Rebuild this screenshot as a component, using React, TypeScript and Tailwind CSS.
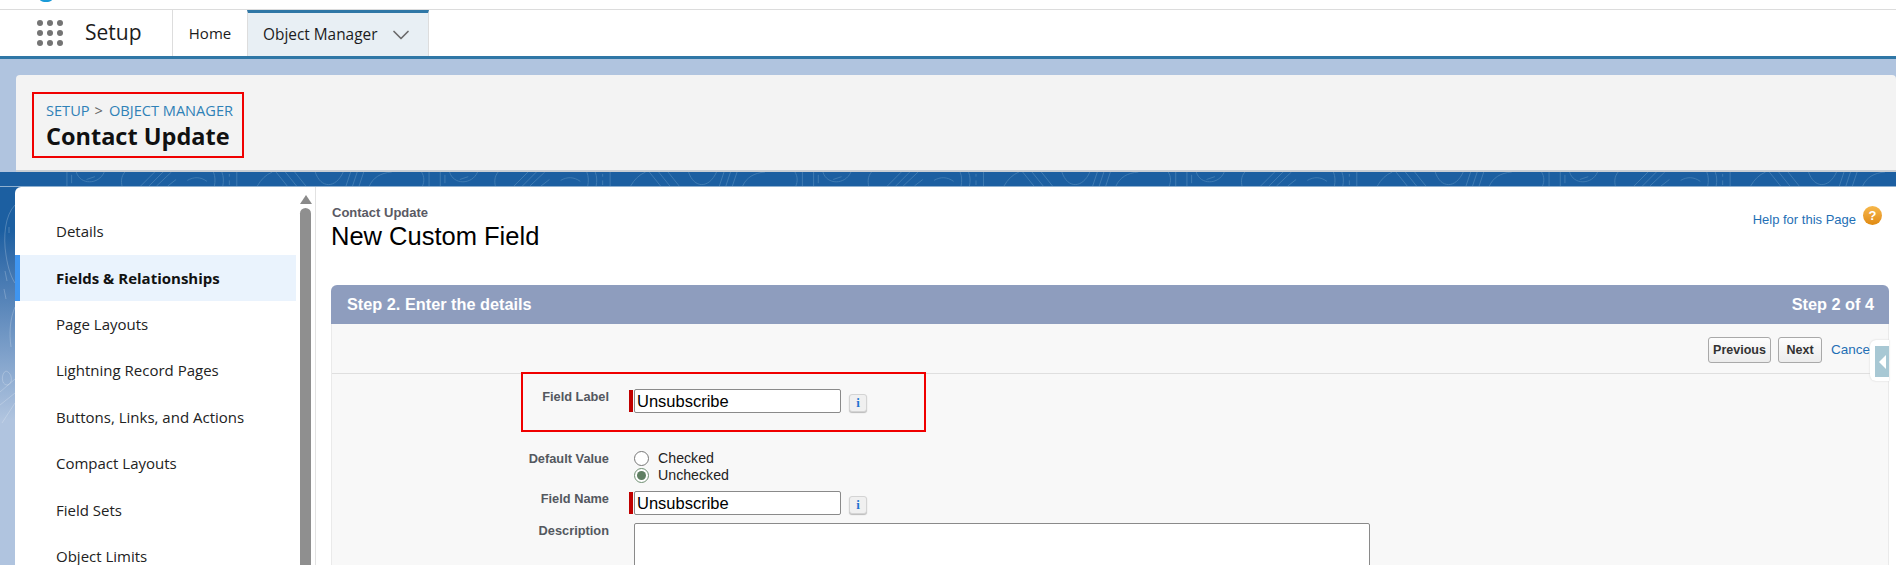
import { ChevronDown } from "lucide-react";

const NAV_ITEMS = [
  "Details",
  "Fields & Relationships",
  "Page Layouts",
  "Lightning Record Pages",
  "Buttons, Links, and Actions",
  "Compact Layouts",
  "Field Sets",
  "Object Limits",
];

const SEGOE = "font-['Open_Sans','Noto_Sans',sans-serif]";
const ARIAL = "font-['Liberation_Sans',Arial,sans-serif]";

function AppGrid() {
  return (
    <svg width="26" height="26" viewBox="0 0 26 26" className="fill-[#747474]">
      {[3, 13, 23].map((cy) =>
        [3, 13, 23].map((cx) => <circle key={`${cx}-${cy}`} cx={cx} cy={cy} r="3" />),
      )}
    </svg>
  );
}

// contour lines of the background texture, one tile is 400px wide
function BandPattern() {
  return (
    <svg className="absolute inset-0 h-full w-full" viewBox="0 0 1896 15" fill="none" stroke="#5b91c0" strokeWidth="1" opacity="0.6">
      {[0, 400, 800, 1200, 1600].map((x) => (
        <g key={x} transform={`translate(${x} 0)`}>
          <path d="M4 0V15M9 3V12" />
          <path d="M14 0C18 14 38 14 44 0" />
          <path d="M25 8L34 5" />
          <path d="M66 0C62 5 62 10 63 15" />
          <path d="M83 15L98 0M92 15L107 0M100 15L116 0M112 15L121 8" />
          <path d="M133 9C140 5 147 5 154 10" />
          <path d="M161 0C163 5 163 10 162 15M170 0C172 5 172 10 171 15M178 2V5M178 9V14M186 0V15" />
          <path d="M208 15C212 8 217 3 224 0" />
          <path d="M228 0L240 15M238 0L250 15M248 0L260 15" />
          <path d="M270 0C276 18 292 18 300 0" />
          <path d="M303 15L308 0M310 15L315 0M317 15L322 0" />
          <path d="M328 15C332 6 340 1 352 0" />
          <path d="M384 0C387 5 387 10 385 15M392 0V15" />
        </g>
      ))}
    </svg>
  );
}

function SideContours() {
  return (
    <svg className="absolute top-0 left-0 h-[260px] w-[15px]" viewBox="0 0 15 260" fill="none" stroke="#ffffff" strokeOpacity="0.22" strokeWidth="1">
      <path d="M15 18C5 28 3 50 6 68C8 82 12 92 15 96" />
      <path d="M9 40L9 46M5 84L7 94M4 102L6 112" />
      <path d="M15 120C10 132 9 146 11 160" />
      <path d="M6 184C1 186 1 198 7 198C13 198 13 186 6 184Z" />
      <path d="M0 205L15 192M0 218L15 206M2 236L15 216" />
    </svg>
  );
}

function InfoButton() {
  return (
    <span className="mt-[3px] ml-[8px] flex h-[18px] w-[18px] items-center justify-center rounded-[3px] border border-[#d4d4d4] bg-[#f0f0f0] font-['Liberation_Serif',serif] text-[13px] font-bold text-[#1f74d0] shadow-[0_1px_1px_#bbb]">
      i
    </span>
  );
}

function TextField({ value }: { value: string }) {
  return (
    <div className="flex items-center">
      <span className="h-[22px] w-1 bg-[#c00000]" />
      <span className={`ml-px flex h-6 w-[207px] items-center rounded-[2px] border border-[#8a8a8a] bg-white pl-[2px] text-[16.5px] text-black ${ARIAL}`}>
        {value}
      </span>
      <InfoButton />
    </div>
  );
}

function FieldLabel({ children }: { children: string }) {
  return (
    <div className={`w-[108px] shrink-0 text-right text-[12.8px] leading-4 font-bold text-[#54585f] ${ARIAL}`}>
      {children}
    </div>
  );
}

function ActionButton({ children, width }: { children: string; width: string }) {
  return (
    <span className={`flex h-[26px] items-center justify-center rounded-[3px] border border-[#a9a9a9] bg-gradient-to-b from-[#fdfdfd] to-[#ececec] text-[12.5px] font-bold text-[#333] ${width} ${ARIAL}`}>
      {children}
    </span>
  );
}

export default function App() {
  return (
    <div className="flex h-[565px] w-[1896px] flex-col overflow-hidden bg-white">
      {/* browser strip above the app */}
      <div className="relative h-[10px] shrink-0 border-b border-[#dcdcdc] bg-white">
        <span className="absolute top-[-8px] left-[39px] h-[10px] w-[14px] rounded-full bg-[#1b9bd8]" />
      </div>

      {/* app nav */}
      <div className="flex h-[49px] shrink-0 border-b-[3px] border-[#2f77a6] bg-white">
        <div className="flex w-[173px] shrink-0 items-center border-r border-[#dddddd] pl-[37px]">
          <AppGrid />
          <span className={`ml-[22px] text-[21px] text-[#1c1c1c] ${SEGOE}`}>Setup</span>
        </div>
        <div className={`flex w-[74px] shrink-0 items-center justify-center text-[15px] text-[#1c1c1c] ${SEGOE}`}>Home</div>
        <div className={`flex w-[182px] shrink-0 items-center border-x border-t-[3px] border-x-[#dddddd] border-t-[#2f77a6] bg-[#e8eff4] pl-[15px] text-[15.4px] whitespace-nowrap text-[#1c1c1c] ${SEGOE}`}>
          Object Manager
          <ChevronDown size={28} strokeWidth={1.5} className="ml-[10px] text-[#6b6b6b]" />
        </div>
      </div>

      {/* page header */}
      <div className="h-[113px] shrink-0 bg-[#b0c4df] pt-4 pl-4">
        <div className="h-[97px] w-[1880px] rounded-t-[4px] border-b-2 border-[#c9ced4] bg-[#f3f3f3] pt-[17px] pl-4">
          <div className="h-[66px] w-[212px] border-[2px] border-[#f00000] pt-[5px] pl-3 whitespace-nowrap">
            <div className={`flex gap-[5px] text-[14.6px] leading-[22px] text-[#2f81b7] ${SEGOE}`}>
              <span>SETUP</span>
              <span className="text-[#666]">&gt;</span>
              <span className="ml-px">OBJECT MANAGER</span>
            </div>
            <div className={`text-[23.5px] leading-[30px] font-bold text-[#111] ${SEGOE}`}>Contact Update</div>
          </div>
        </div>
      </div>

      {/* background band and workspace */}
      <div className="flex min-h-0 flex-1 flex-col bg-gradient-to-b from-[#1c5fa1] from-[15%] to-[#b0c4df] to-[63%]">
        <div className="relative h-[15px] shrink-0 border-b border-[#8fb0d0] bg-[#1c5fa1]">
          <BandPattern />
        </div>
        <div className="relative flex min-h-0 flex-1 pl-[15px]">
          <SideContours />
          {/* sidebar */}
          <div className="flex w-[301px] shrink-0 rounded-tl-[6px] border-r border-[#e2e2e2] bg-white">
            <div className={`w-[281px] pt-[21px] ${SEGOE}`}>
              {NAV_ITEMS.map((item) =>
                item === "Fields & Relationships" ? (
                  <div
                    key={item}
                    className="flex h-[46px] items-center border-l-[5px] border-[#3f95f0] bg-[#eaf3fd] pt-[2px] pl-[36px] text-[15px] font-bold text-[#111]"
                  >
                    {item}
                  </div>
                ) : (
                  <div key={item} className="flex h-[46.5px] items-center pl-[41px] text-[15px] text-[#222]">
                    {item}
                  </div>
                ),
              )}
            </div>
            <div className="ml-[4px] flex w-[11px] flex-col items-center pt-[8px]">
              <span className="h-0 w-0 border-x-[6px] border-b-[9px] border-x-transparent border-b-[#8a8a8a]" />
              <span className="mt-[4px] w-[11px] flex-1 rounded-t-full bg-[#8f8f8f]" />
            </div>
          </div>

          {/* main column */}
          <div className={`relative min-w-0 flex-1 bg-white pl-[15px] ${ARIAL}`}>
            <div className="flex justify-between pt-[19px] pr-[14px]">
              <div>
                <div className="pl-px text-[13px] leading-[14px] font-bold text-[#5a5a64]">Contact Update</div>
                <div className="h-[33px] text-[25.5px] leading-[33px] text-black">New Custom Field</div>
              </div>
              <div className="flex items-start gap-[7px]">
                <span className="mt-[6px] text-[13px] leading-4 text-[#1f6fb5]">Help for this Page</span>
                <span className="flex h-[19px] w-[19px] items-center justify-center rounded-full bg-gradient-to-b from-[#f7b84a] to-[#e08a0c] text-[13px] font-bold text-white">?</span>
              </div>
            </div>

            {/* step panel */}
            <div className="mt-[32px] mr-[7px] rounded-t-[6px] bg-[#f8f8f8]">
              <div className="flex h-[39px] items-center justify-between rounded-t-[6px] bg-[#8e9dbe] pr-[15px] pl-[16px] text-[16.3px] font-bold text-white">
                <span>Step 2. Enter the details</span>
                <span>Step 2 of 4</span>
              </div>
              <div className="border-x border-[#eaeaea]">
                <div className="flex h-[50px] items-start justify-end gap-[7px] border-b border-[#dfdfdf] pt-[13px] pr-[17px]">
                  <ActionButton width="w-[63px]">Previous</ActionButton>
                  <ActionButton width="w-[44px]">Next</ActionButton>
                  <span className="mt-[5px] ml-[2px] w-[40px] text-[13.5px] leading-4 whitespace-nowrap text-[#1f6fb5]">Cancel</span>
                </div>

                <div className="relative h-[200px] pl-[169px]">
                  <div className="absolute top-[-2px] left-[189px] h-[60px] w-[405px] border-[2px] border-[#f00000]" />
                  <div className="flex items-start pt-[15px]">
                    <FieldLabel>Field Label</FieldLabel>
                    <div className="ml-[20px]"><TextField value="Unsubscribe" /></div>
                  </div>
                  <div className="mt-[38px] flex items-start">
                    <FieldLabel>Default Value</FieldLabel>
                    <div className="ml-[25px] flex flex-col gap-[2px] text-[14.2px] leading-[15px] text-[#222]">
                      <div className="flex items-center gap-[9px]">
                        <span className="h-[15px] w-[15px] rounded-full border border-[#777] bg-white" />
                        Checked
                      </div>
                      <div className="flex items-center gap-[9px]">
                        <span className="flex h-[15px] w-[15px] items-center justify-center rounded-full border border-[#6f8f72] bg-white">
                          <span className="h-[9px] w-[9px] rounded-full bg-[#5f7f62]" />
                        </span>
                        Unchecked
                      </div>
                    </div>
                  </div>
                  <div className="mt-[8px] flex items-start">
                    <FieldLabel>Field Name</FieldLabel>
                    <div className="ml-[20px]"><TextField value="Unsubscribe" /></div>
                  </div>
                  <div className="mt-[8px] flex items-start">
                    <FieldLabel>Description</FieldLabel>
                    <div className="ml-[25px] h-[80px] w-[736px] rounded-[2px] border border-[#8a8a8a] bg-white" />
                  </div>
                </div>
              </div>
            </div>

            {/* collapse handle */}
            <div className="absolute top-[153px] right-[7px] h-[41px] w-[19px] rounded-l-[6px] bg-white pt-[6px] pl-[5px] shadow-[0_0_2px_#d0d0d0]">
              <div className="flex h-[31px] w-[14px] items-center justify-center bg-[#a8c8d4]">
                <span className="h-0 w-0 border-y-[7px] border-r-[7px] border-y-transparent border-r-white" />
              </div>
            </div>
          </div>
        </div>
      </div>
    </div>
  );
}
